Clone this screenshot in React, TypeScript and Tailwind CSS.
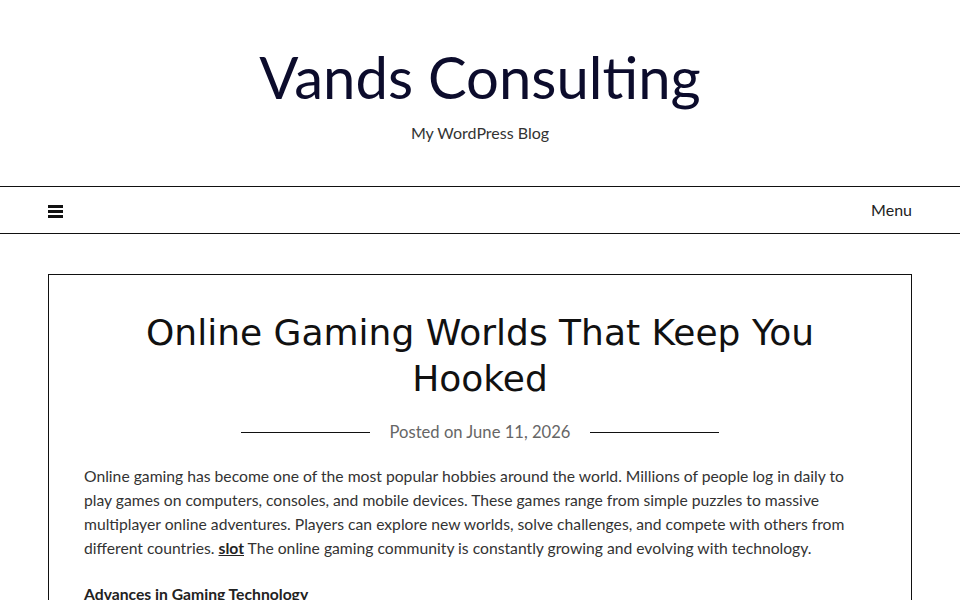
export default function App() {
  return (
    <div className="min-h-screen bg-white" style={{ fontFamily: "Lato, 'Liberation Sans', sans-serif" }}>
      <header className="pt-[43px] pb-[41px] text-center">
        <h1 className="text-[58px] leading-[68px] text-[#0c0c2c]">Vands Consulting</h1>
        <p className="mt-[10px] text-[16px] leading-[24px] text-[#333]">My WordPress Blog</p>
      </header>
      <nav className="border-y border-[#111] h-[48px] px-[48px] flex items-center justify-between">
        <svg width="15" height="13" viewBox="0 0 15 13" className="mt-[3px]">
          <rect x="0" y="0" width="15" height="3" fill="#111" />
          <rect x="0" y="5" width="15" height="3" fill="#111" />
          <rect x="0" y="10" width="15" height="3" fill="#111" />
        </svg>
        <span className="text-[16px] text-[#222]">Menu</span>
      </nav>
      <main className="px-[48px] pt-[40px]">
        <article className="border border-[#111] pl-[35px] pr-[35px] pt-[35px] pb-10">
          <h2
            className="text-center text-[36px] leading-[46px] text-[#111] px-[30px]"
            style={{ fontFamily: "'DejaVu Sans', sans-serif" }}
          >
            Online Gaming Worlds That Keep You Hooked
          </h2>
          <div className="mt-[18px] flex items-center justify-center gap-[20px]">
            <span className="h-px w-[129px] bg-[#111]" />
            <span className="text-[16.6px] text-[#666]">
              Posted on <span className="text-[#666]">June 11, 2026</span>
            </span>
            <span className="h-px w-[129px] bg-[#111]" />
          </div>
          <p className="mt-[19px] mr-[6px] text-[15.7px] leading-[24px] text-[#333]">
            Online gaming has become one of the most popular hobbies around the world. Millions of people log in daily to play games on computers, consoles, and mobile devices. These games range from simple puzzles to massive multiplayer online adventures. Players can explore new worlds, solve challenges, and compete with others from different countries.{" "}
            <a className="font-bold underline text-[#222]">slot</a> The online gaming community is constantly growing and evolving with technology.
          </p>
          <h3 className="mt-[22px] text-[15.7px] leading-[24px] font-bold underline text-[#222]">Advances in Gaming Technology</h3>
        </article>
      </main>
    </div>
  );
}
